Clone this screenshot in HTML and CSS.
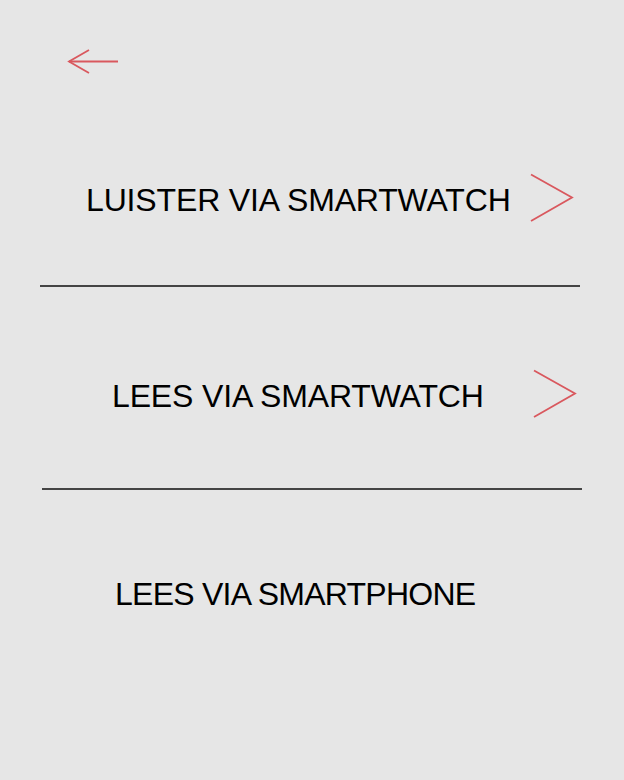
FILE: index.html
```html
<!DOCTYPE html>
<html lang="nl">
<head>
<meta charset="utf-8">
<title>Menu</title>
<link rel="stylesheet" href="styles.css">
</head>
<body>
<div class="screen">
  <header class="header">
    <svg class="back" width="54" height="28" viewBox="0 0 54 28" aria-label="Terug">
      <polyline points="22,2 2,13.5 22,25" fill="none" stroke="#d9585e" stroke-width="1.8" stroke-linejoin="miter"/>
      <line x1="2" y1="13.5" x2="51" y2="13.5" stroke="#d9585e" stroke-width="1.8"/>
    </svg>
  </header>
  <ul class="menu">
    <li class="item item-1">
      <span class="label">LUISTER VIA SMARTWATCH</span>
      <svg class="chev" width="44" height="50" viewBox="0 0 44 50">
        <polyline points="1,1.5 42,24.5 1,48" fill="none" stroke="#d9585e" stroke-width="1.8"/>
      </svg>
    </li>
    <li class="divider"></li>
    <li class="item item-2">
      <span class="label">LEES VIA SMARTWATCH</span>
      <svg class="chev" width="44" height="50" viewBox="0 0 44 50">
        <polyline points="1,1.5 42,24.5 1,48" fill="none" stroke="#d9585e" stroke-width="1.8"/>
      </svg>
    </li>
    <li class="divider divider-2"></li>
    <li class="item item-3">
      <span class="label">LEES VIA SMARTPHONE</span>
    </li>
  </ul>
</div>
</body>
</html>
```
FILE: styles.css
```css
html, body {
  margin: 0;
  padding: 0;
  background: #e6e6e6;
}
body {
  width: 624px;
  height: 780px;
  overflow: hidden;
  font-family: "Liberation Sans", Arial, sans-serif;
  color: #000;
}
.screen {
  display: flex;
  flex-direction: column;
}
.header {
  height: 120px;
  padding: 48px 0 0 67px;
  box-sizing: border-box;
}
.back {
  display: block;
}
.menu {
  list-style: none;
  margin: 0;
  padding: 0;
  display: flex;
  flex-direction: column;
}
.item {
  display: flex;
  align-items: center;
  height: 40px;
}
.label {
  font-size: 32px;
  line-height: 40px;
  letter-spacing: -0.15px;
  white-space: nowrap;
}
.chev {
  display: block;
  flex: none;
  margin-bottom: 5px;
}
.item-1 {
  margin-top: 60px;
  margin-bottom: 65px;
  padding-left: 86px;
}
.item-1 .chev {
  margin-left: auto;
  margin-right: 50px;
}
.item-2 {
  margin-top: 89px;
  margin-bottom: 72px;
  padding-left: 112px;
}
.item-2 .chev {
  margin-left: auto;
  margin-right: 47px;
}
.item-3 {
  margin-top: 84px;
  padding-left: 115px;
}
.item-3 .label {
  letter-spacing: -0.75px;
}
.divider {
  height: 2px;
  background: #444;
  margin: 0 44px 0 40px;
}
.divider-2 {
  margin: 0 42px 0 42px;
}
```
